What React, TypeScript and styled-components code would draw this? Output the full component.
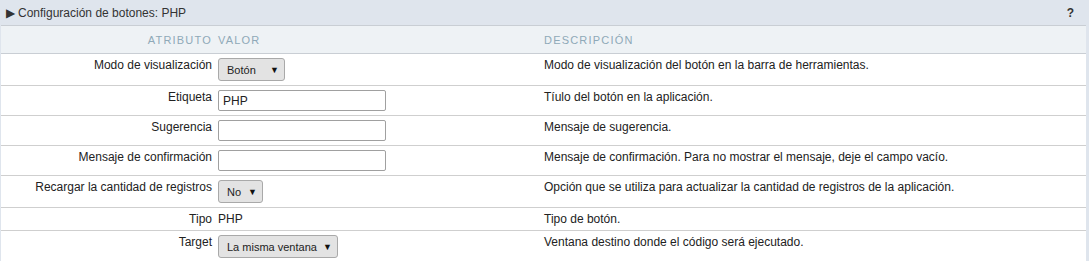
import React from 'react';
import styled, { createGlobalStyle } from 'styled-components';

const GlobalStyle = createGlobalStyle`
  body {
    margin: 0;
    background: #ffffff;
    font-family: "Liberation Sans", Arial, sans-serif;
    font-size: 12px;
    color: #222;
  }
`;

const Panel = styled.div`
  width: 1089px;
  box-sizing: border-box;
  border-left: 1px solid #dfe5ed;
  border-right: 3px solid #dfe5ed;
`;

const TitleBar = styled.div`
  display: flex;
  align-items: center;
  justify-content: space-between;
  height: 25px;
  padding: 0 12px 0 5px;
  background: #dfe5ed;
  border-bottom: 1px solid #c9ced4;
  color: #333;
  font-size: 12px;
`;

const Title = styled.span`
  display: flex;
  align-items: center;
  gap: 3px;
`;

const Caret = styled.span`
  font-size: 12px;
  color: #333;
`;

const Help = styled.span`
  font-weight: bold;
  font-size: 12px;
  color: #333;
`;

const Table = styled.table`
  width: 100%;
  border-collapse: collapse;
  table-layout: fixed;
`;

const HeadCell = styled.th<{ $align?: string; $width?: number }>`
  width: ${p => (p.$width ? `${p.$width}px` : 'auto')};
  height: 27px;
  padding: 0 3px;
  background: #eef2f5;
  border-bottom: 1px solid #c9ced4;
  color: #8fa9b8;
  font-weight: normal;
  font-size: 11px;
  letter-spacing: 1.2px;
  text-transform: uppercase;
  text-align: ${p => p.$align || 'left'};
`;

const Row = styled.tr`
  border-bottom: 1px solid #cfcfcf;
  &:last-child {
    border-bottom: none;
  }
`;

const LabelCell = styled.td`
  padding: 4px 3px;
  vertical-align: top;
  text-align: right;
  line-height: 14px;
  color: #222;
`;

const ValueCell = styled.td`
  padding: 4px 3px;
  vertical-align: top;
  line-height: 14px;
`;

const DescCell = styled.td`
  padding: 4px 3px;
  vertical-align: top;
  line-height: 14px;
`;

const SelectBox = styled.div<{ $width: number }>`
  display: flex;
  align-items: center;
  justify-content: space-between;
  box-sizing: border-box;
  width: ${p => p.$width}px;
  height: 23px;
  padding: 1px 5px 0 8px;
  background: #e3e3e3;
  border: 1px solid #a9a9a9;
  border-radius: 3px;
  font-size: 11px;
  color: #222;
`;

const Arrow = styled.span`
  font-size: 9px;
  color: #111;
`;

const TextInput = styled.div`
  box-sizing: border-box;
  width: 168px;
  height: 21px;
  padding: 3px 4px 0 4px;
  border: 1px solid #a0a0a0;
  border-radius: 2px;
  background: #fff;
  font-size: 12px;
`;

type Field =
  | { kind: 'select'; value: string; width: number }
  | { kind: 'input'; value: string }
  | { kind: 'text'; value: string };

const rows: { label: string; field: Field; desc: string }[] = [
  { label: 'Modo de visualización', field: { kind: 'select', value: 'Botón', width: 67 }, desc: 'Modo de visualización del botón en la barra de herramientas.' },
  { label: 'Etiqueta', field: { kind: 'input', value: 'PHP' }, desc: 'Tíulo del botón en la aplicación.' },
  { label: 'Sugerencia', field: { kind: 'input', value: '' }, desc: 'Mensaje de sugerencia.' },
  { label: 'Mensaje de confirmación', field: { kind: 'input', value: '' }, desc: 'Mensaje de confirmación. Para no mostrar el mensaje, deje el campo vacío.' },
  { label: 'Recargar la cantidad de registros', field: { kind: 'select', value: 'No', width: 45 }, desc: 'Opción que se utiliza para actualizar la cantidad de registros de la aplicación.' },
  { label: 'Tipo', field: { kind: 'text', value: 'PHP' }, desc: 'Tipo de botón.' },
  { label: 'Target', field: { kind: 'select', value: 'La misma ventana', width: 120 }, desc: 'Ventana destino donde el código será ejecutado.' },
];

const renderField = (f: Field) => {
  if (f.kind === 'select') {
    return (
      <SelectBox $width={f.width}>
        <span>{f.value}</span>
        <Arrow>▼</Arrow>
      </SelectBox>
    );
  }
  if (f.kind === 'input') return <TextInput>{f.value}</TextInput>;
  return <span>{f.value}</span>;
};

const App: React.FC = () => (
  <>
    <GlobalStyle />
    <Panel>
      <TitleBar>
        <Title>
          <Caret>▶</Caret>
          Configuración de botones: PHP
        </Title>
        <Help>?</Help>
      </TitleBar>
      <Table>
        <thead>
          <tr>
            <HeadCell $align="right" $width={208}>Atributo</HeadCell>
            <HeadCell $width={320}>Valor</HeadCell>
            <HeadCell>Descripción</HeadCell>
          </tr>
        </thead>
        <tbody>
          {rows.map(r => (
            <Row key={r.label}>
              <LabelCell>{r.label}</LabelCell>
              <ValueCell>{renderField(r.field)}</ValueCell>
              <DescCell>{r.desc}</DescCell>
            </Row>
          ))}
        </tbody>
      </Table>
    </Panel>
  </>
);

export default App;
